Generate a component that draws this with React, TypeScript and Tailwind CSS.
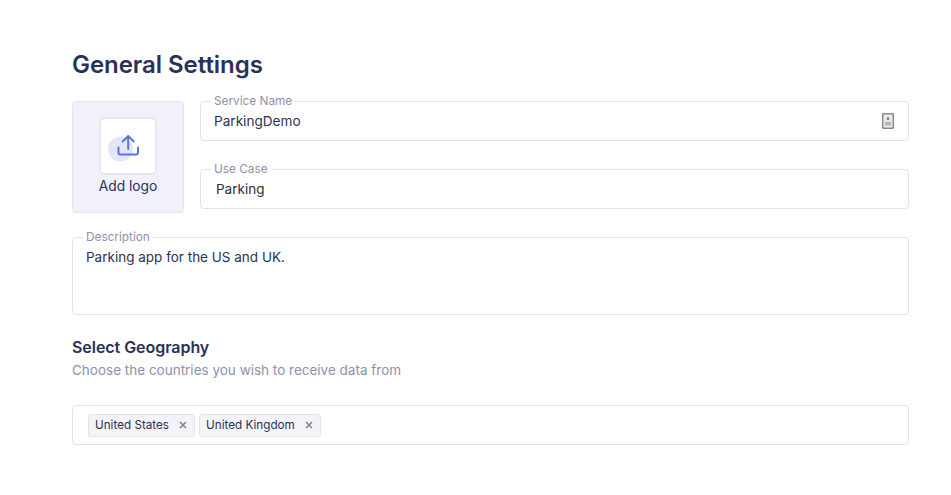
import React from "react";

function Field({ label, className, children }: { label: string; className: string; children: React.ReactNode }) {
  return (
    <div className={"relative rounded-[4px] border border-[#e1e2ea] bg-white " + className}>
      <span className="absolute -top-[8px] left-[10px] bg-white px-[3px] text-[11.8px] leading-[14px] text-[#8f92aa]">{label}</span>
      {children}
    </div>
  );
}

function Tag({ label }: { label: string }) {
  return (
    <div className="flex h-[23px] items-center rounded-[3px] border border-[#e4e5ec] bg-[#f4f4f8] pl-[6px] pr-[7px] text-[11.7px] text-[#2a3158]">
      <span className="mt-[1px]">{label}</span>
      <svg className="ml-[10px]" width="8" height="8" viewBox="0 0 8 8" fill="none" stroke="#7f829b" strokeWidth="1.6">
        <path d="M1 1l6 6M7 1L1 7" />
      </svg>
    </div>
  );
}

export default function App() {
  return (
    <div className="h-[495px] w-[951px] bg-white pl-[72px] pr-[42px] pt-[50px] font-['Inter',sans-serif]">
      <h1 className="text-[24px] font-semibold leading-[30px] tracking-[-0.05px] text-[#2a3158]">General Settings</h1>
      <div className="mt-[21px] flex gap-[16px]">
        <div className="flex h-[112px] w-[112px] shrink-0 flex-col items-center rounded-[4px] border border-[#e3e4f2] bg-[#f1f1fb] pt-[15px]">
          <div className="flex h-[58px] w-[58px] items-center justify-center rounded-[6px] border-2 border-[#e6e7f1] bg-white">
            <svg width="40" height="40" viewBox="0 0 40 40" fill="none">
              <circle cx="12.5" cy="23" r="12.5" fill="#e2e6f8" />
              <path d="M20.2 23V10M14.7 15.5l5.5-5.5 5.5 5.5M10.5 21.5v5a2 2 0 0 0 2 2h15.5a2 2 0 0 0 2-2v-5" stroke="#5a74e4" strokeWidth="2" strokeLinecap="round" strokeLinejoin="round" />
            </svg>
          </div>
          <span className="mt-[1px] text-[13.8px] leading-[20px] text-[#2a3158]">Add logo</span>
        </div>
        <div className="flex min-w-0 flex-1 flex-col gap-[28px]">
          <Field label="Service Name" className="flex h-[40px] items-center justify-between pl-[13px] pr-[14px]">
            <span className="text-[13.6px] text-[#2a3158]">ParkingDemo</span>
            <svg width="12" height="16" viewBox="0 0 12 16" fill="none">
              <rect x="0.75" y="0.75" width="10.5" height="14.5" rx="0.5" fill="#ececec" stroke="#8a8a8a" strokeWidth="1.5" />
              <path d="M6 3.5l1.2 1.5v2H4.8V5z" fill="#8a8a8a" />
              <rect x="3" y="9" width="6" height="3.5" fill="#b5b5b5" />
            </svg>
          </Field>
          <Field label="Use Case" className="flex h-[40px] items-center pl-[15px]">
            <span className="text-[13.5px] text-[#2e3038]">Parking</span>
          </Field>
        </div>
      </div>
      <Field label="Description" className="mt-[24px] h-[78px] pl-[13px] pt-[9px]">
        <p className="text-[13.5px] leading-[20px] text-[#2a3158]">Parking app for the US and UK.</p>
      </Field>
      <h2 className="mt-[22px] text-[16px] font-semibold leading-[20px] tracking-[-0.05px] text-[#2a3158]">Select Geography</h2>
      <p className="mt-[3px] text-[13.5px] leading-[20px] text-[#8f92aa]">Choose the countries you wish to receive data from</p>
      <div className="mt-[25px] flex h-[40px] items-center gap-[4px] rounded-[4px] border border-[#e1e2ea] bg-white pl-[15px]">
        <Tag label="United States" />
        <Tag label="United Kingdom" />
      </div>
    </div>
  );
}
